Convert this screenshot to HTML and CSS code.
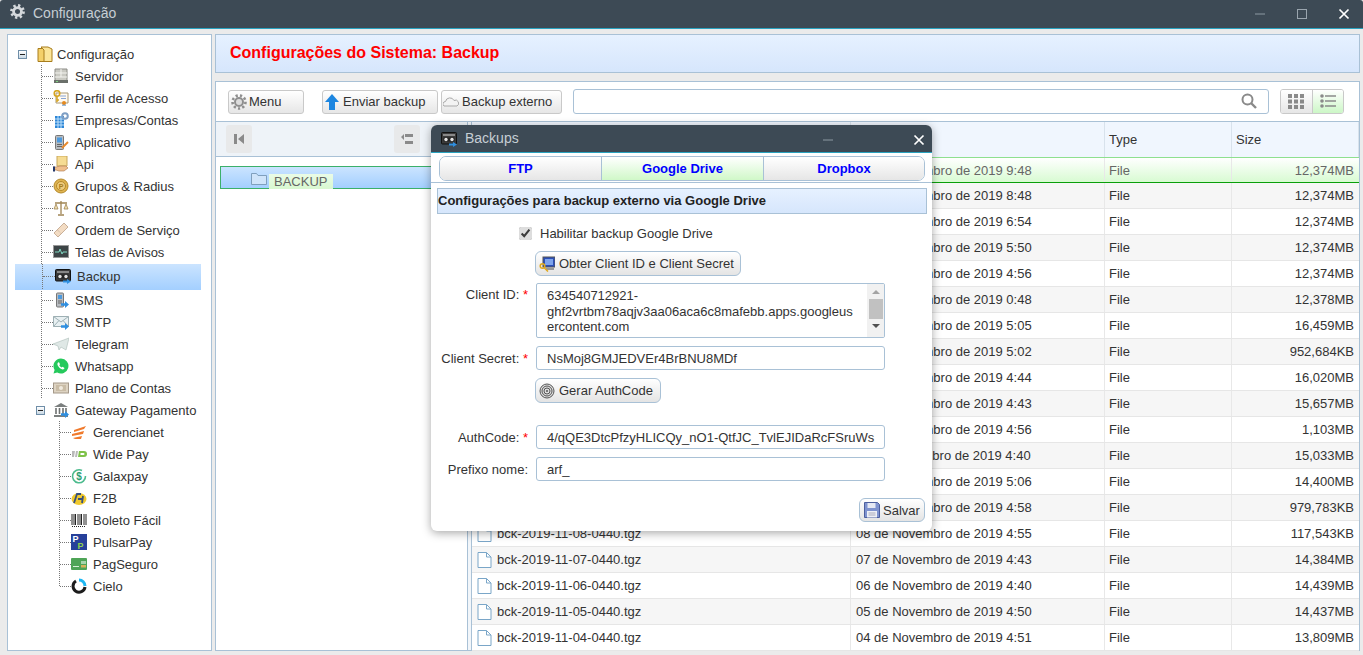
FILE: index.html
```html
<!DOCTYPE html>
<html lang="pt-BR">
<head>
<meta charset="utf-8">
<title>Configuração</title>
<link rel="stylesheet" href="styles.css">
</head>
<body>
<svg class="defs" aria-hidden="true">
  <symbol id="file" viewBox="0 0 15 16"><path d="M1 .5h8.500L14 5v10.500H1z" fill="#fff" stroke="#7aa6c8"/><path d="M9.500 .5V5H14" fill="none" stroke="#7aa6c8"/></symbol>
  <symbol id="arrow" viewBox="0 0 8 7"><path d="M0 2.200h4V0l4 3.500L4 7V4.800H0z" fill="#2f8fe0"/></symbol>
  <symbol id="tape" viewBox="0 0 16 16"><rect x=".5" y="1.500" width="15" height="11.500" rx="1" fill="#3a3a3a" stroke="#111"/><rect x="2" y="3" width="12" height="2" fill="#888"/><rect x="2.500" y="6.500" width="11" height="4" rx="1" fill="#222"/><circle cx="5" cy="8.500" r="1.700" fill="#e2e2e2"/><circle cx="11" cy="8.500" r="1.700" fill="#e2e2e2"/><path d="M8 12.500h4V11l4 2.500-4 2.500v-1.500H8z" fill="#2f8fe0"/></symbol>
</svg>

<header class="titlebar">
  <svg class="title-gear" viewBox="0 0 16 16"><circle cx="8" cy="8" r="6.400" fill="none" stroke="#d4d8dc" stroke-width="3" stroke-dasharray="2.400 2.600"/><circle cx="8" cy="8" r="4.200" fill="none" stroke="#d4d8dc" stroke-width="3"/></svg>
  <span class="title-text">Configuração</span>
  <div class="win-controls">
    <svg viewBox="0 0 12 12"><path d="M1 6h10" stroke="#8d99a3"/></svg>
    <svg viewBox="0 0 12 12"><rect x="1.500" y="1.500" width="9" height="9" fill="none" stroke="#9aa5ae"/></svg>
    <svg viewBox="0 0 12 12"><path d="M1.500 1.500l9 9M10.500 1.500l-9 9" stroke="#fff" stroke-width="1.700"/></svg>
  </div>
</header>

<div class="app">
  <aside class="sidebar">
    <div class="root-row">
      <span class="toggle"></span>
      <svg class="ic" viewBox="0 0 16 16"><path d="M1 2.500h7v13H1z" fill="#f4d06a" stroke="#a87d1c"/><path d="M4 1h7l4 2v12.500H7V4z" fill="#fbe59a" stroke="#a87d1c"/></svg>
      <span>Configuração</span>
    </div>
    <ul class="tree">
      <li class="row"><i class="conn"></i><svg class="ic" viewBox="0 0 16 16"><path d="M2 1h12v13H2z" fill="#c9c9c2" stroke="#8c8c86"/><path d="M2 5h12M2 9h12M8 1v8" stroke="#f4f4f0"/><path d="M1 12h14v3H1z" fill="#6a6f6a"/><path d="M3 13.500h2" stroke="#7fd27f"/></svg><span>Servidor</span></li>
      <li class="row"><i class="conn"></i><svg class="ic" viewBox="0 0 16 16"><path d="M3 3h12v10H3z" fill="#fffaf0" stroke="#a99874"/><path d="M7 6h6M8 8.500h5" stroke="#8aa6d6"/><circle cx="4" cy="3.500" r="2.800" fill="none" stroke="#d6a520" stroke-width="1.500"/><path d="M4 6v6M4 10h2" stroke="#d6a520" stroke-width="1.500"/><circle cx="11" cy="13" r="2" fill="#e58a1f"/><path d="M10 14.500v1.500M12 14.500v1.500" stroke="#2f74c0"/></svg><span>Perfil de Acesso</span></li>
      <li class="row"><i class="conn"></i><svg class="ic" viewBox="0 0 16 16"><path d="M2 4h9v12H2z" fill="#2d86d6"/><path d="M2 7h9M2 10h9M2 13h9M5 4v12M8 4v12" stroke="#bfe0fa"/><circle cx="12" cy="4" r="2.800" fill="none" stroke="#7d9ec4" stroke-width="2"/></svg><span>Empresas/Contas</span></li>
      <li class="row"><i class="conn"></i><svg class="ic" viewBox="0 0 16 16"><rect x="2.500" y="1.500" width="8" height="14" rx="1" fill="#b8bcc0" stroke="#777"/><rect x="4" y="3.500" width="5" height="5" fill="#4d9ade"/><path d="M4 10.500h5M4 12.500h5" stroke="#666"/><path d="M9 14l6-6" stroke="#e88a2c" stroke-width="2"/></svg><span>Aplicativo</span></li>
      <li class="row"><i class="conn"></i><svg class="ic" viewBox="0 0 16 16"><path d="M4 0h10v10H4z" fill="#f6dc93" stroke="#c9a75a"/><path d="M0 11h3l4-1h6l2 2-4 3H6l-3-1H0z" fill="#f0bf8c" stroke="#a7744a" stroke-width=".6"/><path d="M0 10.500h2v5H0z" fill="#24386b"/></svg><span>Api</span></li>
      <li class="row"><i class="conn"></i><svg class="ic" viewBox="0 0 16 16"><circle cx="8" cy="8" r="7" fill="#e0b450" stroke="#b58a2c"/><circle cx="8" cy="8" r="4.500" fill="#eecb7c" stroke="#b58a2c"/><text class="coin" x="8" y="10.500">P</text></svg><span>Grupos &amp; Radius</span></li>
      <li class="row"><i class="conn"></i><svg class="ic" viewBox="0 0 16 16"><path d="M8 1v13M2 3h12M5 15h6" stroke="#a08554" stroke-width="1.300" fill="none"/><path d="M3 4L1 9h4zM13 4l-2 5h4z" fill="#f1dfb2" stroke="#a08554" stroke-width=".8"/></svg><span>Contratos</span></li>
      <li class="row"><i class="conn"></i><svg class="ic" viewBox="0 0 16 16"><path d="M1 11L11 1l4 4L5 15z" fill="#f3dcc3" stroke="#c9b099"/><path d="M4.500 8L8 11.500" stroke="#c9b099" stroke-dasharray="1 1"/></svg><span>Ordem de Serviço</span></li>
      <li class="row"><i class="conn"></i><svg class="ic" viewBox="0 0 16 16"><rect x=".5" y="1.500" width="15" height="12" fill="#3c4446" stroke="#999"/><path d="M2 8h4l1-3 2 5 1-2h4" fill="none" stroke="#7fd6c0"/></svg><span>Telas de Avisos</span></li>
      <li class="row selected"><i class="conn"></i><svg class="ic" viewBox="0 0 16 16"><use href="#tape"/></svg><span>Backup</span></li>
      <li class="row"><i class="conn"></i><svg class="ic" viewBox="0 0 16 16"><rect x="3.500" y="1" width="7" height="14" rx="1" fill="#b8bcc0" stroke="#777"/><rect x="5" y="3" width="4" height="4" fill="#4d9ade"/><path d="M5 9h4M5 11h4" stroke="#666"/><use href="#arrow" x="8" y="9" width="8" height="7"/></svg><span>SMS</span></li>
      <li class="row"><i class="conn"></i><svg class="ic" viewBox="0 0 16 16"><path d="M.5 2.500h15v10H.5z" fill="#e8f0f2" stroke="#9eb0b4"/><path d="M.5 2.500L8 8l7.500-5.500M.5 12.500L6 6.500M15.500 12.500L10 6.500" fill="none" stroke="#9eb0b4"/><use href="#arrow" x="8" y="9" width="8" height="7"/></svg><span>SMTP</span></li>
      <li class="row"><i class="conn"></i><svg class="ic" viewBox="0 0 16 16"><path d="M0 8L16 2l-3 12-5-3-2 3-1-4z" fill="#dfe8e6" stroke="#b4c4c0" stroke-width=".7"/></svg><span>Telegram</span></li>
      <li class="row"><i class="conn"></i><svg class="ic" viewBox="0 0 16 16"><path d="M8 .5a7.500 7.500 0 0 0-6.400 11.400L.5 15.500l3.700-1A7.500 7.500 0 1 0 8 .5z" fill="#25c95c"/><path d="M5 4.500c-1 1-.8 2.800 1 4.800s4 2.600 5 1.700l.5-1-2-1.200-1 .7c-1-.5-1.700-1.200-2.200-2.300l.7-1-1-2z" fill="#fff"/></svg><span>Whatsapp</span></li>
      <li class="row"><i class="conn"></i><svg class="ic" viewBox="0 0 16 16"><rect x=".5" y="3" width="15" height="10" fill="#ddd3c2" stroke="#a5998a"/><rect x="3" y="5" width="10" height="6" fill="#c9bca6"/><circle cx="8" cy="8" r="2" fill="#f0eadf"/></svg><span>Plano de Contas</span></li>
    </ul>
    <div class="gateway-row">
      <span class="toggle"></span>
      <svg class="ic" viewBox="0 0 16 16"><path d="M8 1l7 4H1zM1 13h14v2H1z" fill="#7b7f7e"/><path d="M3 6v6M6.500 6v6M10 6v6M13 6v6" stroke="#6d7170" stroke-width="1.600"/><use href="#arrow" x="8" y="9" width="8" height="7"/></svg>
      <span>Gateway Pagamento</span>
    </div>
    <ul class="tree sub">
      <li class="row"><i class="conn"></i><svg class="ic" viewBox="0 0 16 16"><path d="M3 6l12-4-2 3L3 8zM1 10l12-3-1 3-11 2zM2 14l9-2-1 3H4z" fill="#f07a2c"/></svg><span>Gerencianet</span></li>
      <li class="row"><i class="conn"></i><svg class="ic" viewBox="0 0 16 16"><path d="M1 5h3l-1 6H1zM5 5h2l-1 6H4z" fill="#b9b9b9"/><path d="M8 5h5a3 3 0 0 1 0 6H7z" fill="#7fc24a"/><path d="M9.500 7h3a1 1 0 0 1 0 2h-3z" fill="#fff"/></svg><span>Wide Pay</span></li>
      <li class="row"><i class="conn"></i><svg class="ic" viewBox="0 0 16 16"><path d="M11 2.500A6.500 6.500 0 1 0 14.500 8" fill="none" stroke="#4dbb8e" stroke-width="1.600"/><text class="dollar" x="8" y="11.500">$</text></svg><span>Galaxpay</span></li>
      <li class="row"><i class="conn"></i><svg class="ic" viewBox="0 0 16 16"><ellipse cx="8" cy="9" rx="7.500" ry="6" fill="#f0c92e"/><path d="M3 13L6 4h4M7 9h4M11 13l1-7" fill="none" stroke="#36507e" stroke-width="1.800"/></svg><span>F2B</span></li>
      <li class="row"><i class="conn"></i><svg class="ic" viewBox="0 0 16 16"><path d="M1 2v11M3 2v11M4.500 2v11M7 2v11M9 2v11M10.500 2v11M13 2v11M15 2v11" stroke="#222"/><path d="M1 14.500h14" stroke="#222" stroke-dasharray="1 1"/></svg><span>Boleto Fácil</span></li>
      <li class="row"><i class="conn"></i><svg class="ic" viewBox="0 0 16 16"><rect width="16" height="16" fill="#26409a"/><text class="pp" x="1.500" y="7.500">P</text><text class="pp green" x="6.500" y="15">P</text></svg><span>PulsarPay</span></li>
      <li class="row"><i class="conn"></i><svg class="ic" viewBox="0 0 16 16"><rect y="2" width="16" height="12" rx="1" fill="#4ea457"/><rect x="10" y="5" width="5" height="3" fill="#a6d5ac"/><rect x="10" y="9" width="5" height="2.500" fill="#d5b25c"/><path d="M2 10.500h6" stroke="#d6efd8"/></svg><span>PagSeguro</span></li>
      <li class="row"><i class="conn"></i><svg class="ic" viewBox="0 0 16 16"><path d="M8 2a6 6 0 0 1 6 6" fill="none" stroke="#1db7f2" stroke-width="3"/><path d="M14 9a6 6 0 1 1-9-6" fill="none" stroke="#1c1c1c" stroke-width="3"/></svg><span>Cielo</span></li>
    </ul>
  </aside>

  <main class="content">
    <section class="page-head"><h1>Configurações do Sistema: Backup</h1></section>
    <section class="panel">
      <div class="toolbar">
        <button class="btn btn-menu"><svg class="ic" viewBox="0 0 16 16"><circle cx="8" cy="8" r="6.500" fill="none" stroke="#8f8f8f" stroke-width="2.600" stroke-dasharray="2.200 2.200"/><circle cx="8" cy="8" r="4" fill="#ddd" stroke="#8f8f8f" stroke-width="2"/></svg>Menu</button>
        <button class="btn btn-send"><svg class="ic" viewBox="0 0 16 16"><path d="M8 0l7 8h-4v8H5V8H1z" fill="#1d86e0"/></svg>Enviar backup</button>
        <button class="btn btn-ext"><svg class="ic" viewBox="0 0 16 16"><path d="M1 12a2.500 2.500 0 0 1 1.500-4.500A4.500 4.500 0 0 1 11 6.500 3 3 0 0 1 14 12z" fill="#f3f3f3" stroke="#a9a9a9"/></svg>Backup externo</button>
        <div class="search"><svg viewBox="0 0 16 16"><circle cx="6.500" cy="6.500" r="5" fill="none" stroke="#8a8a8a" stroke-width="2"/><path d="M10 10l5 5" stroke="#8a8a8a" stroke-width="2.400"/></svg></div>
        <div class="view-switch">
          <span class="view"><svg viewBox="0 0 16 16"><path d="M0 1h4v4H0zM6 1h4v4H6zM12 1h4v4h-4zM0 6.500h4v4H0zM6 6.500h4v4H6zM12 6.500h4v4h-4zM0 12h4v4H0zM6 12h4v4H6zM12 12h4v4h-4z" fill="#8a8a8a"/></svg></span>
          <span class="view on"><svg viewBox="0 0 16 16"><circle cx="2" cy="3" r="1.800" fill="#8a8a8a"/><circle cx="2" cy="8" r="1.800" fill="#8a8a8a"/><circle cx="2" cy="13" r="1.800" fill="#8a8a8a"/><path d="M5 3h11M5 8h11M5 13h11" stroke="#8a8a8a" stroke-width="1.600"/></svg></span>
        </div>
      </div>
      <div class="split">
        <div class="folders">
          <div class="folders-head">
            <span class="mini"><svg viewBox="0 0 12 12"><path d="M1 1h3v10H1zM11 1v10L5 6z" fill="#8a8a8a"/></svg></span>
            <span class="mini"><svg viewBox="0 0 12 12"><path d="M4 1h8v3H4zM4 8h8v3H4zM0 4l3-3v6z" fill="#8a8a8a"/></svg></span>
          </div>
          <div class="folder-row"><svg class="ic" viewBox="0 0 16 16"><path d="M.5 13.500v-11h5l1.500 2h8.500v9z" fill="#cfe4fa" stroke="#7f9fbd"/></svg><span class="folder-name">BACKUP</span></div>
        </div>
        <div class="splitter"></div>
        <div class="files">
          <div class="f-row f-head"><span>Name</span><span>Date</span><span>Type</span><span>Size</span></div>
          <div class="f-row active"><span class="n"><svg class="fi"><use href="#file"/></svg>bck-2019-11-22-0440.tgz</span><span>22 de Novembro de 2019 9:48</span><span>File</span><span class="sz">12,374MB</span></div>
          <div class="f-row"><span class="n"><svg class="fi"><use href="#file"/></svg>bck-2019-11-21-0440.tgz</span><span>21 de Novembro de 2019 8:48</span><span>File</span><span class="sz">12,374MB</span></div>
          <div class="f-row"><span class="n"><svg class="fi"><use href="#file"/></svg>bck-2019-11-20-0440.tgz</span><span>20 de Novembro de 2019 6:54</span><span>File</span><span class="sz">12,374MB</span></div>
          <div class="f-row"><span class="n"><svg class="fi"><use href="#file"/></svg>bck-2019-11-19-0440.tgz</span><span>19 de Novembro de 2019 5:50</span><span>File</span><span class="sz">12,374MB</span></div>
          <div class="f-row"><span class="n"><svg class="fi"><use href="#file"/></svg>bck-2019-11-18-0440.tgz</span><span>18 de Novembro de 2019 4:56</span><span>File</span><span class="sz">12,374MB</span></div>
          <div class="f-row"><span class="n"><svg class="fi"><use href="#file"/></svg>bck-2019-11-17-0440.tgz</span><span>17 de Novembro de 2019 0:48</span><span>File</span><span class="sz">12,378MB</span></div>
          <div class="f-row"><span class="n"><svg class="fi"><use href="#file"/></svg>bck-2019-11-16-0440.tgz</span><span>16 de Novembro de 2019 5:05</span><span>File</span><span class="sz">16,459MB</span></div>
          <div class="f-row"><span class="n"><svg class="fi"><use href="#file"/></svg>bck-2019-11-15-0440.tgz</span><span>15 de Novembro de 2019 5:02</span><span>File</span><span class="sz">952,684KB</span></div>
          <div class="f-row"><span class="n"><svg class="fi"><use href="#file"/></svg>bck-2019-11-14-0440.tgz</span><span>14 de Novembro de 2019 4:44</span><span>File</span><span class="sz">16,020MB</span></div>
          <div class="f-row"><span class="n"><svg class="fi"><use href="#file"/></svg>bck-2019-11-13-0440.tgz</span><span>13 de Novembro de 2019 4:43</span><span>File</span><span class="sz">15,657MB</span></div>
          <div class="f-row"><span class="n"><svg class="fi"><use href="#file"/></svg>bck-2019-11-12-0440.tgz</span><span>12 de Novembro de 2019 4:56</span><span>File</span><span class="sz">1,103MB</span></div>
          <div class="f-row"><span class="n"><svg class="fi"><use href="#file"/></svg>bck-2019-11-11-0440.tgz</span><span>11 de Novembro de 2019 4:40</span><span>File</span><span class="sz">15,033MB</span></div>
          <div class="f-row"><span class="n"><svg class="fi"><use href="#file"/></svg>bck-2019-11-10-0440.tgz</span><span>10 de Novembro de 2019 5:06</span><span>File</span><span class="sz">14,400MB</span></div>
          <div class="f-row"><span class="n"><svg class="fi"><use href="#file"/></svg>bck-2019-11-09-0440.tgz</span><span>09 de Novembro de 2019 4:58</span><span>File</span><span class="sz">979,783KB</span></div>
          <div class="f-row"><span class="n"><svg class="fi"><use href="#file"/></svg>bck-2019-11-08-0440.tgz</span><span>08 de Novembro de 2019 4:55</span><span>File</span><span class="sz">117,543KB</span></div>
          <div class="f-row"><span class="n"><svg class="fi"><use href="#file"/></svg>bck-2019-11-07-0440.tgz</span><span>07 de Novembro de 2019 4:43</span><span>File</span><span class="sz">14,384MB</span></div>
          <div class="f-row"><span class="n"><svg class="fi"><use href="#file"/></svg>bck-2019-11-06-0440.tgz</span><span>06 de Novembro de 2019 4:40</span><span>File</span><span class="sz">14,439MB</span></div>
          <div class="f-row"><span class="n"><svg class="fi"><use href="#file"/></svg>bck-2019-11-05-0440.tgz</span><span>05 de Novembro de 2019 4:50</span><span>File</span><span class="sz">14,437MB</span></div>
          <div class="f-row"><span class="n"><svg class="fi"><use href="#file"/></svg>bck-2019-11-04-0440.tgz</span><span>04 de Novembro de 2019 4:51</span><span>File</span><span class="sz">13,809MB</span></div>
        </div>
      </div>
    </section>
  </main>
</div>

<div class="modal">
  <div class="modal-title">
    <svg class="ic" viewBox="0 0 16 16"><use href="#tape"/></svg>
    <span class="modal-name">Backups</span>
    <svg class="m-min" viewBox="0 0 12 12"><path d="M1 7h10" stroke="#8d99a3"/></svg>
    <svg class="m-close" viewBox="0 0 12 12"><path d="M1.500 1.500l9 9M10.500 1.500l-9 9" stroke="#fff" stroke-width="1.700"/></svg>
  </div>
  <div class="tabs-wrap">
    <div class="tabs"><span>FTP</span><span class="on">Google Drive</span><span>Dropbox</span></div>
  </div>
  <div class="modal-body">
    <div class="section-head">Configurações para backup externo via Google Drive</div>
    <div class="form">
      <div class="check-row"><input type="checkbox" checked><span>Habilitar backup Google Drive</span></div>
      <div class="fld-row r-get"><button class="btn act"><svg class="ic" viewBox="0 0 16 16"><rect x="4" y="1" width="12" height="10" fill="#2b4fb8" stroke="#555"/><path d="M6 3h8v6H6z" fill="#7ea4ec"/><path d="M7 12h8v2H7z" fill="#999"/><circle cx="3.500" cy="10" r="2.300" fill="none" stroke="#e0a81c" stroke-width="1.500"/><path d="M5 11.500l4 4" stroke="#e0a81c" stroke-width="1.500"/></svg>Obter Client ID e Client Secret</button></div>
      <div class="fld-row r-id">
        <label>Client ID: <b>*</b></label>
        <div class="area">
          <div class="area-text">634540712921-<br>ghf2vrtbm78aqjv3aa06aca6c8mafebb.apps.googleus<br>ercontent.com</div>
          <div class="sb"><i class="up"></i><i class="thumb"></i><i class="down"></i></div>
        </div>
      </div>
      <div class="fld-row r-sec"><label>Client Secret: <b>*</b></label><div class="inp">NsMoj8GMJEDVEr4BrBNU8MDf</div></div>
      <div class="fld-row r-gen"><button class="btn act"><svg class="ic" viewBox="0 0 16 16"><circle cx="8" cy="8" r="7" fill="#ddd" stroke="#555"/><circle cx="8" cy="8" r="5" fill="none" stroke="#555"/><circle cx="8" cy="8" r="3" fill="none" stroke="#555"/><circle cx="8" cy="8" r="1" fill="#555"/></svg>Gerar AuthCode</button></div>
      <div class="fld-row r-auth"><label>AuthCode: <b>*</b></label><div class="inp">4/qQE3DtcPfzyHLICQy_nO1-QtfJC_TvlEJIDaRcFSruWs</div></div>
      <div class="fld-row r-pre"><label>Prefixo nome:</label><div class="inp">arf_</div></div>
      <div class="save-row"><button class="btn act save"><svg class="ic" viewBox="0 0 16 16"><path d="M.5 .5h13l2 2v13H.5z" fill="#7f93cf" stroke="#4d5f9e"/><rect x="3.500" y="1" width="8" height="5" fill="#e6e9f3"/><rect x="3" y="9" width="10" height="6.500" fill="#eef0f6"/><path d="M4.500 11h7M4.500 13h7" stroke="#aab"/></svg>Salvar</button></div>
    </div>
  </div>
</div>
</body>
</html>
```
FILE: styles.css
```css
* { box-sizing: border-box; }
html, body { margin: 0; height: 655px; overflow: hidden; }
body {
  font-family: "Liberation Sans", Arial, sans-serif;
  font-size: 13px;
  color: #333;
  background: #ebebeb;
  display: flex;
  flex-direction: column;
}
.defs { position: absolute; width: 0; height: 0; }
svg { display: block; flex: none; }
.ic { width: 16px; height: 16px; }
.coin { font: bold 7px "Liberation Sans", sans-serif; fill: #a87d1c; text-anchor: middle; }
.dollar { font: bold 10px "Liberation Sans", sans-serif; fill: #2d9d70; text-anchor: middle; }
.pp { font: bold 9px "Liberation Sans", sans-serif; fill: #fff; }
.pp.green { fill: #8fd14f; }

/* window title */
.titlebar {
  height: 29px;
  flex: none;
  background: #3d4a55;
  border-bottom: 1px solid #2aa3c0;
  border-radius: 3px 3px 0 0;
  display: flex;
  align-items: center;
  padding: 0 8px 0 10px;
  color: #c6ced4;
  font-size: 14px;
}
.title-gear { width: 15px; height: 15px; margin: -5px 8px 0 0; }
.title-text { flex: 1; margin-top: -2px; }
.win-controls { display: flex; gap: 30px; margin-right: 5px; }
.win-controls svg { width: 12px; height: 12px; }

/* layout */
.app {
  flex: 1;
  min-height: 0;
  display: flex;
  padding: 5px 3px 4px 7px;
  gap: 3px;
}
.sidebar {
  width: 205px;
  flex: none;
  background: #fff;
  border: 1px solid #a9c1d6;
  padding-top: 8px;
  color: #333;
}
.root-row, .gateway-row { display: flex; align-items: center; height: 22px; }
.root-row { padding-left: 10px; gap: 4px; }
.root-row .toggle { margin-right: 6px; }
.gateway-row { padding-left: 28px; }
.gateway-row .toggle { margin-right: 8px; }
.gateway-row .ic { margin-right: 6px; }
.toggle {
  width: 9px; height: 9px;
  border: 1px solid #6f8ea8;
  background: linear-gradient(#fff, #c9d8e4) ;
  display: flex; align-items: center; justify-content: center;
  flex: none;
}
.toggle::before { content: ""; width: 5px; height: 1px; background: #222; }
.tree {
  list-style: none;
  margin: 0 10px 0 33px;
  padding: 0;
  background: repeating-linear-gradient(#777 0 1px, transparent 1px 2px) 0 0 / 1px 100% no-repeat;
}
.tree.sub {
  margin-left: 51px;
  background-size: 1px calc(100% - 11px);
}
.row { display: flex; align-items: center; height: 22px; padding-left: 1px; }
.row .ic { margin-right: 6px; }
.conn { width: 11px; height: 0; border-top: 1px dotted #777; flex: none; }
.sub .conn { width: 11px; }
.row.selected {
  height: 26px;
  margin: 1px 0 -1px -26px;
  padding: 0 0 2px 28px;
  background:
    repeating-linear-gradient(#777 0 1px, transparent 1px 2px) 27px 0 / 1px 100% no-repeat,
    linear-gradient(#cbe4ff, #a3cfff);
}
.row.selected .conn { width: 12px; }

/* main */
.content { flex: 1; min-width: 0; display: flex; flex-direction: column; gap: 8px; }
.page-head {
  height: 39px;
  flex: none;
  border: 1px solid #a9c1d6;
  background: linear-gradient(#e6f1ff, #d6e6fc);
  display: flex;
  align-items: center;
  padding-left: 14px;
}
.page-head h1 { margin: 0 0 1px; font-size: 16px; font-weight: bold; color: #f00; }
.panel {
  flex: 1;
  min-height: 0;
  border: 1px solid #a9c1d6;
  background: #fff;
  display: flex;
  flex-direction: column;
}
.toolbar {
  height: 40px;
  flex: none;
  display: flex;
  align-items: center;
  padding: 0 15px 0 12px;
  border-bottom: 1px solid #a9c1d6;
}
.btn {
  height: 24px;
  display: flex;
  align-items: center;
  gap: 3px;
  padding: 0 3px;
  font: inherit;
  color: #333;
  white-space: nowrap;
  border: 1px solid #c9c9c9;
  border-radius: 3px;
  background: linear-gradient(#fff, #e6e6e6);
}
.btn-menu { width: 76px; margin-right: 18px; padding-left: 2px; gap: 2px; }
.btn-send { width: 116px; margin-right: 3px; padding-left: 1px; }
.btn-ext { width: 121px; margin-right: 11px; padding-left: 1px; }
.search {
  flex: 1;
  height: 25px;
  margin-top: -1px;
  border: 1px solid #a9c1d6;
  border-radius: 3px;
  display: flex;
  align-items: center;
  justify-content: flex-end;
  padding-right: 11px;
}
.search svg { width: 16px; height: 16px; }
.view-switch {
  display: flex;
  margin-left: 11px;
  width: 64px;
  height: 25px;
  margin-top: -1px;
  border: 1px solid #c9c9c9;
  border-radius: 3px;
  overflow: hidden;
}
.view { flex: 1; display: flex; align-items: center; justify-content: center; background: linear-gradient(#fff, #e6e6e6); }
.view + .view { border-left: 1px solid #c9c9c9; }
.view.on { background: linear-gradient(#fff, #ccf7c6); }
.view svg { width: 16px; height: 16px; }

.split { flex: 1; min-height: 0; display: flex; }
.folders { width: 251px; flex: none; }
.folders-head {
  height: 35px;
  background: #eef3f8;
  border-bottom: 1px solid #a9c1d6;
  display: flex;
  justify-content: space-between;
  align-items: center;
  padding: 0 47px 0 10px;
}
.mini {
  width: 26px; height: 28px;
  background: #e8e9ea;
  border-radius: 3px;
  display: flex; align-items: center; justify-content: center;
}
.mini svg { width: 12px; height: 12px; }
.folder-row {
  margin: 9px 0 0 4px;
  height: 23px;
  border: 1px solid #3bb06a;
  background: linear-gradient(#cbe4ff, #a3cfff);
  display: flex;
  align-items: flex-end;
  padding-left: 30px;
  color: #666;
}
.folder-row .ic { margin-bottom: 1px; margin-right: 2px; }
.folder-name { background: linear-gradient(#eafbe6, #d8f8d0); padding: 0 6px 0 5px; line-height: 15px; margin-bottom: -1px; }
.splitter { width: 5px; flex: none; border-left: 1px solid #a9c1d6; border-right: 1px solid #a9c1d6; background: #f2f6fa; }
.files { flex: 1; min-width: 0; }
.f-row {
  display: grid;
  grid-template-columns: 379px 254px 127px 1fr;
  height: 26px;
  align-items: center;
  border-bottom: 1px solid #e6e6e6;
}
.f-row:nth-child(odd) { background: #f6f6f6; }
.f-row > span {
  height: 100%;
  display: flex;
  align-items: center;
  padding-left: 5px;
  border-right: 1px solid #e8e8e8;
  white-space: nowrap;
  overflow: hidden;
}
.f-row > span:nth-child(3) { padding-left: 4px; }
.f-row > span:nth-child(4) { padding-left: 4px; }
.f-row > .n { gap: 5px; }
.f-row > .sz { justify-content: flex-end; padding: 0 5px 0 0; border-right: 0; }
.f-head {
  height: 35px;
  background: #f0f6fe !important;
  border-bottom: 0;
  color: #333;
}
.f-head > span { border-right-color: #d8e2ec; }
.f-row.active {
  background: linear-gradient(#fff, #d8fbd2);
  border-top: 1px solid #8fe08f;
  border-bottom: 1px solid #0a9f0a;
  color: #666;
}
.fi { width: 15px; height: 16px; }

/* dialog */
.modal {
  position: absolute;
  left: 431px;
  top: 125px;
  width: 501px;
  height: 406px;
  background: #fff;
  border-radius: 6px;
  box-shadow: 0 2px 10px rgba(0,0,0,.35);
  display: flex;
  flex-direction: column;
  overflow: hidden;
}
.modal-title {
  height: 28px;
  flex: none;
  background: #3d4a55;
  border-bottom: 1px solid #2aa3c0;
  display: flex;
  align-items: center;
  padding: 0 7px 0 10px;
  color: #c6ced4;
  font-size: 14px;
}
.modal-name { flex: 1; margin: -2px 0 0 8px; }
.m-min { width: 12px; height: 12px; margin-right: 79px; }
.m-close { width: 12px; height: 12px; margin-top: 2px; }
.tabs-wrap { height: 30px; flex: none; padding: 3px 7px 0 8px; border-bottom: 1px solid #a9c1d6; }
.tabs {
  display: grid;
  grid-template-columns: 161px 162px 1fr;
  height: 25px;
  border: 1px solid #a9c1d6;
  border-radius: 7px;
  overflow: hidden;
}
.tabs span {
  display: flex; align-items: center; justify-content: center;
  font-size: 13px; font-weight: bold; color: #00f;
  background: linear-gradient(#fff, #e6e6e6);
}
.tabs span + span { border-left: 1px solid #a9c1d6; }
.tabs span.on { background: linear-gradient(#fff, #d0f8c8); }
.modal-body { flex: 1; padding: 5px 5px 0 6px; }
.section-head {
  height: 26px;
  border: 1px solid #a9c1d6;
  background: linear-gradient(#e6f1ff, #d6e6fc);
  display: flex;
  align-items: center;
  padding-bottom: 1px;
  font-weight: bold;
  color: #222;
}
.form { display: flex; flex-direction: column; }
.check-row { display: flex; align-items: center; margin: 11px 0 0 82px; height: 16px; color: #333; }
.check-row input { width: 13px; height: 13px; margin: 0 8px 0 0; accent-color: #ddd; }
.fld-row { display: flex; align-items: center; padding-left: 98px; }
.fld-row label { width: 98px; margin-left: -98px; padding-right: 7px; text-align: right; white-space: nowrap; }
.fld-row label b { color: #f00; font-weight: normal; }
.r-id { align-items: flex-start; }
.r-id label { padding-top: 4px; }
.inp, .area {
  width: 349px;
  margin-left: 1px;
  border: 1px solid #a9c1d6;
  border-radius: 3px;
  color: #333;
}
.inp { height: 24px; display: flex; align-items: center; padding-left: 10px; white-space: nowrap; overflow: hidden; }
.area { height: 55px; display: flex; border-radius: 2px; overflow: hidden; align-items: stretch; }
.area-text { flex: 1; padding: 4px 0 0 10px; line-height: 15.500px; white-space: nowrap; overflow: hidden; }
.sb { width: 17px; background: #f1f1f1; display: flex; flex-direction: column; align-items: center; flex: none; }
.sb .thumb { width: 14px; height: 20px; background: #c1c1c1; margin: 5px 0 5px; }
.sb .up, .sb .down { width: 0; height: 0; border-left: 4px solid transparent; border-right: 4px solid transparent; margin-top: 6px; }
.sb .up { border-bottom: 4px solid #a3a3a3; }
.sb .down { border-top: 4px solid #505050; margin-top: 0; }
.act { border-color: #a9c1d6; border-radius: 6px; height: 25px; gap: 4px; background: linear-gradient(#fff, #e4e4e4); }
.r-get { margin-top: 10px; }
.r-id { margin-top: 7px; }
.r-sec { margin-top: 8px; }
.r-gen { margin-top: 8px; }
.r-auth { margin-top: 22px; }
.r-pre { margin-top: 8px; }
.save-row { display: flex; justify-content: flex-end; margin: 17px 2px 0 0; }
.r-get .act { width: 206px; }
.r-gen .act { width: 126px; }
.save { width: 66px; height: 24px; padding-left: 4px; gap: 3px; }
```
